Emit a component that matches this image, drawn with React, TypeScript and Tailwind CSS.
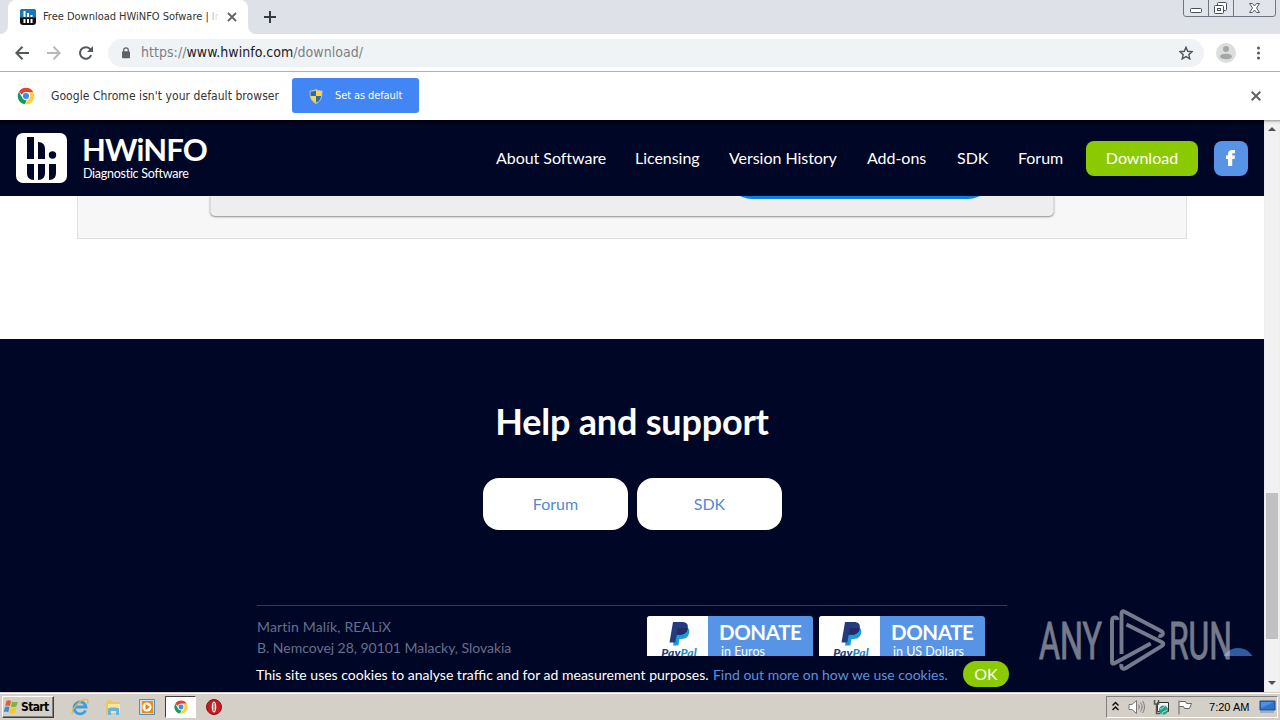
import React from 'react';

interface NavItem {
    label: string;
    width: string;
}

const navItems: NavItem[] = [
    { label: 'About Software', width: 'w-[109px]' },
    { label: 'Licensing', width: 'w-[64px]' },
    { label: 'Version History', width: 'w-[108px]' },
    { label: 'Add-ons', width: 'w-[60px]' },
    { label: 'SDK', width: 'w-[31px]' },
    { label: 'Forum', width: 'w-[45px]' },
];

const ChromeLogo: React.FC = () => (
    <svg className="h-[18px] w-[18px] shrink-0" viewBox="0 0 48 48">
        <circle cx="24" cy="24" r="22" fill="#fff" />
        <path d="M24 2a22 22 0 0 1 19 11H24a11 11 0 0 0-10.400 7.400L5 13A22 22 0 0 1 24 2z" fill="#db4437" />
        <path d="M5 13l9.500 16.500A11 11 0 0 0 26 34.800L21 46A22 22 0 0 1 5 13z" fill="#0f9d58" />
        <path d="M43 13a22 22 0 0 1-22 33l12.500-16.500A11 11 0 0 0 32 16l-3-3z" fill="#ffcd40" />
        <circle cx="24" cy="24" r="10.500" fill="#f1f1f1" />
        <circle cx="24" cy="24" r="8" fill="#4285f4" />
    </svg>
);

const TabStrip: React.FC = () => (
    <div className="flex h-[34px] items-end justify-between bg-[#dee1e8]">
        <div className="flex h-[34px] items-end">
            <div className="h-2 w-2 bg-white">
                <div className="h-2 w-2 rounded-br-lg bg-[#dee1e8]" />
            </div>
            <div className="flex h-[34px] w-[240px] items-center rounded-t-lg bg-white pl-3">
                <svg className="h-4 w-4 shrink-0" viewBox="0 0 16 16">
                    <rect width="16" height="16" rx="3" fill="#111" />
                    <path d="M0 8.500V3a3 3 0 0 1 3-3h10a3 3 0 0 1 3 3v5.500z" fill="#1979b8" />
                    <path d="M3.500 2h2v6h-2zM7 4h2v4H7zM10.500 6h2v2h-2zM3.500 10h2v4h-2zM7 10h2v4H7zM10.500 10h2v4h-2z" fill="#fff" />
                </svg>
                <div className="relative ml-[7px] w-[177px] overflow-hidden whitespace-nowrap font-['DejaVu_Sans_Condensed','DejaVu_Sans',sans-serif] text-[11px] tracking-[-0.02px] text-[#333]">
                    Free Download HWiNFO Sofware | In
                    <div className="absolute inset-y-0 right-0 w-3 bg-linear-to-r from-white/40 to-white" />
                </div>
                <svg className="ml-[7px] h-2.5 w-2.5 shrink-0" viewBox="0 0 10 10">
                    <path d="M1 1l8 8M9 1L1 9" stroke="#5f6368" strokeWidth="1.800" />
                </svg>
            </div>
            <div className="h-2 w-2 bg-white">
                <div className="h-2 w-2 rounded-bl-lg bg-[#dee1e8]" />
            </div>
            <svg className="mb-[11px] ml-2 h-3 w-3" viewBox="0 0 12 12">
                <path d="M6 0v12M0 6h12" stroke="#333a44" strokeWidth="2" />
            </svg>
        </div>
        <svg className="mr-1 h-[17px] w-[93px] self-start" viewBox="0 0 93 17">
            <path d="M.5 0v14a2.500 2.500 0 0 0 2.500 2.500h87a2.500 2.500 0 0 0 2.500-2.500V0M25.500 0v16M50.500 0v16" fill="#e1e4eb" stroke="#6f7581" />
            <rect x="7.500" y="8.500" width="11" height="4" rx="1" fill="#fff" stroke="#484e5a" />
            <rect x="34.500" y="2.500" width="9" height="8" rx="1" fill="#fff" stroke="#484e5a" />
            <rect x="31.500" y="5.500" width="9" height="8" rx="1" fill="#fff" stroke="#484e5a" />
            <rect x="34.500" y="8.500" width="3" height="2" fill="#fff" stroke="#484e5a" />
            <path d="M66.500 3.500h3l2 2.500 2-2.500h3L73.500 8l3 4.500h-3l-2-2.500-2 2.500h-3l3-4.500z" fill="#fff" stroke="#555b67" />
        </svg>
    </div>
);

const Toolbar: React.FC = () => (
    <div className="flex h-[38px] items-center border-b border-[#adb0b1] bg-white">
        <svg className="ml-[15px] h-[14px] w-[14px]" viewBox="0 0 14 14" fill="none" stroke="#55585c" strokeWidth="2">
            <path d="M14 7H1.500M7.500.8L1.300 7l6.200 6.200" />
        </svg>
        <svg className="ml-[18px] h-[14px] w-[14px]" viewBox="0 0 14 14" fill="none" stroke="#b6b8ba" strokeWidth="2">
            <path d="M0 7h12.500M6.500.8L12.700 7l-6.200 6.200" />
        </svg>
        <svg className="ml-[18px] h-[14px] w-[14px]" viewBox="0 0 14 14">
            <path d="M12.200 9.200A5.800 5.800 0 1 1 11 2.900L12.500 4.500" fill="none" stroke="#55585c" strokeWidth="2" />
            <path d="M14 0v6H8z" fill="#55585c" />
        </svg>
        <div className="ml-[15px] flex h-7 w-[1096px] items-center rounded-full bg-[#f0f3f5] pr-[11px] pl-[13px]">
            <svg className="h-3 w-[10px]" viewBox="0 0 10 12">
                <path d="M2.700 5V3.200a2.300 2.300 0 0 1 4.600 0V5" fill="none" stroke="#5f6368" strokeWidth="1.300" />
                <rect x="1" y="4.300" width="8" height="7" rx="1" fill="#5f6368" />
            </svg>
            <div className="ml-[10px] font-['DejaVu_Sans_Condensed','DejaVu_Sans',sans-serif] text-[14px] tracking-[0.04px] whitespace-nowrap text-[#7c8084]">
                https://<span className="text-[#202124]">www.hwinfo.com</span>/download/
            </div>
            <svg className="ml-auto h-[14px] w-[14px]" viewBox="0 0 14 14">
                <path d="M7 1.200l1.700 4.100 4.400.4-3.300 2.900 1 4.300L7 10.600l-3.800 2.300 1-4.300L.9 5.700l4.400-.4z" fill="none" stroke="#55585c" strokeWidth="1.400" />
            </svg>
        </div>
        <svg className="ml-3 h-5 w-5" viewBox="0 0 20 20">
            <circle cx="10" cy="10" r="10" fill="#dcdddd" />
            <circle cx="10" cy="6" r="3" fill="#a5a6a7" />
            <ellipse cx="10" cy="13.500" rx="6" ry="2.800" fill="#a5a6a7" />
        </svg>
        <svg className="ml-[21px] h-[14px] w-[3px]" viewBox="0 0 3 14" fill="#55585c">
            <circle cx="1.500" cy="2" r="1.500" />
            <circle cx="1.500" cy="7" r="1.500" />
            <circle cx="1.500" cy="12" r="1.500" />
        </svg>
    </div>
);

const InfoBar: React.FC = () => (
    <div className="flex h-12 items-center bg-white pb-px pl-[17px] font-['DejaVu_Sans_Condensed','DejaVu_Sans',sans-serif]">
        <ChromeLogo />
        <div className="ml-4 w-[241px] text-[12px] tracking-[0.06px] whitespace-nowrap text-[#333]">Google Chrome isn't your default browser</div>
        <button className="flex h-[35px] w-[127px] items-center rounded-[3px] bg-[#4285f4] pt-px pl-[17px] text-[11px] tracking-[-0.1px] whitespace-nowrap text-white">
            <svg className="mr-3 h-[15px] w-[14px] shrink-0" viewBox="0 0 14 15">
                <path d="M7 .5c2 1.200 4 1.500 6 1.500 0 6-1 10-6 12.500C2 12 1 8 1 2c2 0 4-.3 6-1.500z" fill="#ffd83d" stroke="#b9c3c9" />
                <path d="M7 1.500V7H1.800C1.500 5.500 1.500 4 1.500 2.600 3.500 2.600 5.500 2.200 7 1.500zM7 7h5.200c-.6 3-2 5.300-5.200 6.800z" fill="#286cb5" />
            </svg>
            Set as default
        </button>
        <svg className="mt-px mr-[19px] ml-auto h-[10px] w-[10px]" viewBox="0 0 10 10">
            <path d="M.7.7l8.600 8.600M9.300.7L.7 9.300" stroke="#5f6368" strokeWidth="2" />
        </svg>
    </div>
);

const SiteHeader: React.FC = () => (
    <header className="flex h-[76px] shrink-0 items-center bg-linear-to-b from-[#00020f] to-[#000626] to-8% pl-4 text-white">
        <svg className="h-[50px] w-[51px]" viewBox="0 0 51 50">
            <rect width="51" height="50" rx="7" fill="#fff" />
            <g fill="#000626">
                <path d="M11 4h7v22h-7zM22 9c5 0 7 3 7 7v10h-7z" />
                <circle cx="36.500" cy="22" r="3.700" />
                <path d="M11 31h7v16c-5 0-7-3-7-7zM22 31h7v9c0 4-2 7-7 7zM33 31h7v9c0 4-2 7-7 7z" />
            </g>
        </svg>
        <div className="ml-4 w-[125px] whitespace-nowrap">
            <div className="-ml-px text-[31px] leading-[31px] font-bold tracking-[-0.9px]">HWiNFO</div>
            <div className="pt-px text-[12.5px] leading-4 tracking-[-0.27px]">Diagnostic Software</div>
        </div>
        <nav className="ml-[288px] flex gap-[30px] text-[16px] leading-5 tracking-[-0.04px] whitespace-nowrap">
            {navItems.map((item) => (
                <a key={item.label} className={item.width}>{item.label}</a>
            ))}
        </nav>
        <a className="ml-[23px] flex h-[35px] w-[112px] items-center justify-center rounded-lg bg-[#8bca00] text-[16px]">Download</a>
        <a className="ml-4 flex h-[35px] w-[34px] items-center justify-center rounded-lg bg-[#5894e6]">
            <svg className="h-4 w-[10px]" viewBox="0 0 10 16">
                <path d="M2 16V9H0V5.500h2V4C2 1.500 3.800 0 6.300 0H9v3.200H7.400C6.600 3.200 6.200 3.500 6.200 4.200v1.300H9L8.600 9H6.200v7z" fill="#fff" />
            </svg>
        </a>
    </header>
);

const DonateButton: React.FC<{ currency: string }> = ({ currency }) => (
    <a className="flex h-[52px] w-[166px] overflow-hidden rounded-[3px] bg-[#5894e6] text-white">
        <div className="flex w-[61px] flex-col items-center bg-white pt-1.5 pl-[3px]">
            <svg className="h-[24px] w-[21px] shrink-0" viewBox="0 0 21 24">
                <path d="M7 6h12c2 2 1.500 5 .5 7-1.500 3-4 4-7.500 4h-1.500l-1.200 6.500H4z" fill="#1b9bd7" />
                <path d="M4 0h9c4 0 6.500 2 5.800 6-.8 5-4 6.800-8.300 6.800H7.800L6.300 20.500H.5z" fill="#253b80" />
                <path d="M8.500 6h9.500c.5 0 .7.200.7.500-1 4.500-4 6.300-8.200 6.300H7.500z" fill="#222d65" />
            </svg>
            <div className="text-[12px] leading-[13px] font-black tracking-[0.1px] text-[#253b80] italic">Pay<span className="text-[#1b8fc9]">Pal</span></div>
        </div>
        <div className="pt-1 pl-[11px] whitespace-nowrap">
            <div className="text-[20.5px] leading-6 font-bold tracking-[-0.4px]">DONATE</div>
            <div className="pl-0.5 text-[12.5px] leading-[15px]">{currency}</div>
        </div>
    </a>
);

const Watermark: React.FC = () => (
    <svg className="absolute bottom-[20px] left-[1038px] h-[64px] w-[194px] opacity-50" viewBox="0 0 194 64" fill="#e9edf2">
        <g fontFamily="Roboto, sans-serif" fontSize="51" stroke="#e9edf2" strokeWidth="0.9">
            <text x="1" y="51.300" textLength="63" lengthAdjust="spacingAndGlyphs">ANY</text>
            <text x="131" y="51.300" textLength="63" lengthAdjust="spacingAndGlyphs">RUN</text>
        </g>
        <g fill="none" stroke="#e9edf2" strokeWidth="3.900" strokeLinejoin="round" strokeLinecap="butt">
            <path d="M79.500 12c-.5-3-5.500-4-5.500 1.500v40.500c0 1.800 1 2 2.500 1.200L112.700 35.500" />
            <path d="M83.500 46V5.500c0-2 1.300-2.800 3-1.800l36.500 19.300c3.500 2 1.500 6-2.500 4.500" />
            <path d="M88.500 16.500l35.500 17.800c1.800 1 1.800 2.500 0 3.500L88 60c-3 2-5.500 0-4.500-4" />
        </g>
    </svg>
);

const SitePage: React.FC = () => (
    <div className="relative flex h-[572px] w-[1264px] flex-col overflow-hidden bg-white font-[Lato,sans-serif]">
        <SiteHeader />
        <section className="h-[143px] shrink-0 pl-[77px]">
            <div className="h-[43px] w-[1110px] border border-t-0 border-[#dfdfdf] bg-[#f7f7f7] pl-[132px]">
                <div className="h-[20px] w-[844px] rounded-b-[5px] border-x border-[#ddd] bg-[#eee] shadow-[0_1px_2px_#8b8b8b]">
                    <div className="ml-[516px] h-[3px] overflow-hidden">
                        <div className="-mt-[47px] h-[50px] w-[266px] rounded-full bg-[#0b7fe6]" />
                    </div>
                </div>
            </div>
        </section>
        <footer className="flex h-[317px] shrink-0 flex-col items-center overflow-hidden bg-[#000626]">
            <h2 className="mt-[57px] text-[36px] leading-[50px] font-bold tracking-[-0.2px] whitespace-nowrap text-white">Help and support</h2>
            <div className="mt-[32px] flex gap-[9px] pl-[1px] text-[16px] text-[#5289d5]">
                <a className="flex h-[52px] w-[145px] items-center justify-center rounded-2xl bg-white">Forum</a>
                <a className="flex h-[52px] w-[145px] items-center justify-center rounded-2xl bg-white">SDK</a>
            </div>
            <div className="mt-[75px] flex h-[60px] w-[750px] justify-between border-t border-[#343c5a] pt-[10px] pr-[22px]">
                <div className="text-[14px] leading-[21px] whitespace-nowrap text-[#66708c]">
                    <div className="tracking-[0.16px]">Martin Malík, REALiX</div>
                    <div className="tracking-[-0.03px]">B. Nemcovej 28, 90101 Malacky, Slovakia</div>
                </div>
                <div className="flex gap-1.5">
                    <DonateButton currency="in Euros" />
                    <DonateButton currency="in US Dollars" />
                </div>
            </div>
        </footer>
        <div className="absolute top-[528px] left-[1221px] h-[34px] w-[34px] rounded-full bg-[#2f5ba0]" />
        <div className="relative flex h-9 shrink-0 items-center bg-[#000626] pl-64 text-[14px] whitespace-nowrap text-white">
            <div className="w-[457px]">This site uses cookies to analyse traffic and for ad measurement purposes.</div>
            <div className="w-[250px] tracking-[-0.02px] text-[#5c91dc]">Find out more on how we use cookies.</div>
            <button className="flex h-[26px] w-[46px] items-center justify-center rounded-full bg-[#8bca00] text-[16px]">OK</button>
        </div>
        <Watermark />
    </div>
);

const Scrollbar: React.FC = () => (
    <div className="flex h-[572px] w-4 flex-col items-center bg-[#f1f1f1] shadow-[inset_0_3px_3px_-2px_#888]">
        <svg className="mt-[7px] h-1 w-2" viewBox="0 0 8 4">
            <path d="M0 4l4-4 4 4z" fill="#505050" />
        </svg>
        <div className="mt-[362px] h-[146px] w-3 bg-[#c1c1c1]" />
        <svg className="mt-[42px] h-1 w-2" viewBox="0 0 8 4">
            <path d="M0 0l4 4 4-4z" fill="#505050" />
        </svg>
    </div>
);

const Taskbar: React.FC = () => (
    <div className="flex h-7 items-center border-t border-[#d4d0c8] bg-[#d4d0c8] font-['DejaVu_Sans_Condensed','DejaVu_Sans',sans-serif] text-[11px] text-black shadow-[inset_0_1px_0_#fff]">
        <div className="mt-px ml-[2px] flex h-[22px] w-[52px] items-center border border-[#404040] border-t-white border-l-white text-[12px] font-bold tracking-[-0.65px] whitespace-nowrap shadow-[inset_-1px_-1px_0_#808080]">
            <svg className="mr-0.5 h-4 w-4 shrink-0" viewBox="0 0 16 16">
                <path d="M3.500 2C5 1 6.500 1.200 8 2L6.800 7.200C5.300 6.400 3.800 6.400 2.200 7.200z" fill="#e8592b" />
                <path d="M9 2.400c1.800.9 3.700 1 5.800 0L13.500 7.600c-2 1-3.900.9-5.700 0z" fill="#79b83a" />
                <path d="M2 8.200c1.500-.9 3-.9 4.500-.1L5.300 13.200C3.800 12.400 2.300 12.400.7 13.300z" fill="#3e88d1" />
                <path d="M7.500 8.500c1.900 1 3.800 1 5.800.1L12 13.800c-2 .9-3.900.9-5.700 0z" fill="#f7c52c" />
            </svg>
            Start
        </div>
        <svg className="mt-px ml-[17px] h-[18px] w-[18px]" viewBox="0 0 18 18" fill="none">
            <path d="M14.500 12.500A6 6 0 1 1 15 9H4" stroke="#3a9fe0" strokeWidth="2.800" />
            <path d="M1.500 16C-.5 12 11-1 16.500 2c1 .8.600 2 0 3.500" stroke="#e8b73a" strokeWidth="1.300" />
        </svg>
        <svg className="mt-px ml-4 h-[17px] w-[17px]" viewBox="0 0 17 17">
            <path d="M1 3l2-2h4l1 2h7v12H1z" fill="#e9c764" />
            <path d="M3 5h12v9H3z" fill="#f8e6a2" />
            <path d="M3 16V9.500C3 8 14 8 14 9.500V16h-3v-4H6v4z" fill="#66b4df" />
        </svg>
        <svg className="mt-px ml-[17px] h-4 w-4" viewBox="0 0 16 16">
            <path d="M.5.5h15v15H.5z" fill="#c9def2" stroke="#528fc2" />
            <rect x="3" y="2" width="11" height="12" fill="#f28a18" />
            <circle cx="8" cy="8" r="4.500" fill="#fff" />
            <path d="M6.500 5l4.500 3-4.500 3z" fill="#ec7a10" />
        </svg>
        <div className="mt-px ml-[10px] flex h-[22px] w-[31px] items-center justify-center border border-white border-t-[#404040] border-l-[#404040] bg-white">
            <div className="flex scale-80"><ChromeLogo /></div>
        </div>
        <svg className="mt-px ml-[10px] h-4 w-4" viewBox="0 0 16 16">
            <circle cx="8" cy="8" r="7.500" fill="#c31d22" stroke="#8b1014" />
            <ellipse cx="8" cy="8" rx="2.300" ry="5.500" fill="#f8e9e9" />
            <path d="M8 4v8" stroke="#9b1a1e" strokeWidth="1" />
        </svg>
        <div className="mt-px mr-[2px] ml-auto flex h-[22px] w-[172px] items-center border border-white border-t-[#808080] border-l-[#808080] pl-[5px]">
            <svg className="mb-[3px] h-[10px] w-[7px]" viewBox="0 0 7 10" fill="none" stroke="#111" strokeWidth="1.500">
                <path d="M.5 4.500l3-3 3 3M.5 9l3-3 3 3" />
            </svg>
            <svg className="ml-[9px] h-4 w-[17px]" viewBox="0 0 17 16" fill="none" stroke="#777">
                <path d="M1 5.500h3L8.500 1.500v13L4 10.500H1z" fill="#fff" />
                <path d="M10.500 5.500c1 1.500 1 3.500 0 5M12.500 3.500c2 2.500 2 6.500 0 9M14.500 2c2.500 3 2.500 9 0 12" />
            </svg>
            <svg className="ml-[8px] h-4 w-4" viewBox="0 0 16 16">
                <path d="M4.500 3.500h11v9h-11z" fill="#eef3f5" stroke="#333" />
                <path d="M1.500 1v4h4V1M3.500 5v9.500h4" fill="none" stroke="#555" strokeWidth="1.500" />
                <circle cx="10.500" cy="11" r="4.500" fill="#25a381" />
                <path d="M7 10c3 0 3-2 5-3M9 15c0-3 3-2 5-4" stroke="#a8e1ec" fill="none" />
            </svg>
            <svg className="mb-px ml-[8px] h-4 w-4" viewBox="0 0 16 16">
                <path d="M2 1.500v14M2.500 2.500h6l1 2h5l-2 5h-5l-1-2h-4" fill="#fff" stroke="#666" />
            </svg>
            <div className="ml-[16px] w-[42px] font-['Liberation_Sans',sans-serif] tracking-[0.02px] whitespace-nowrap">7:20 AM</div>
            <svg className="ml-[8px] h-[14px] w-[17px]" viewBox="0 0 17 14">
                <path d="M1 1h15v9H1z" fill="#2e72ce" stroke="#174481" />
                <path d="M2 2h13L2 8z" fill="#4c91df" />
                <path d="M1 12h14" stroke="#9db0c3" strokeWidth="2" />
            </svg>
        </div>
    </div>
);

export default function App() {
    return (
        <div className="h-[720px] w-[1280px] overflow-hidden bg-white">
            <TabStrip />
            <Toolbar />
            <InfoBar />
            <div className="flex h-[572px]">
                <SitePage />
                <Scrollbar />
            </div>
            <Taskbar />
        </div>
    );
}
